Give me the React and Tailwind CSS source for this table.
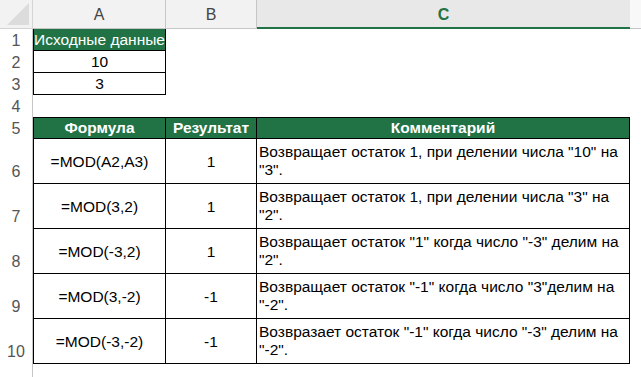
import React from 'react';

const green = 'bg-[#217346]';

const rows = [
  { f: '=MOD(A2,A3)', r: '1', c: ['Возвращает остаток 1, при делении числа "10" на', '"3".'] },
  { f: '=MOD(3,2)', r: '1', c: ['Возвращает остаток 1, при делении числа "3" на', '"2".'] },
  { f: '=MOD(-3,2)', r: '1', c: ['Возвращает остаток "1" когда число "-3" делим на', '"2".'] },
  { f: '=MOD(3,-2)', r: '-1', c: ['Возвращает остаток "-1" когда число "3"делим на', '"-2".'] },
  { f: '=MOD(-3,-2)', r: '-1', c: ['Возвразает остаток "-1" когда число "-3" делим на', '"-2".'] }
];

function RowNum({ n, tall }) {
  return <div className={`border-r border-[#c6c6c6] text-[#555] text-[16px] text-center flex items-end justify-center ${tall ? 'pb-[3px]' : 'pb-[1px]'}`}>{n}</div>;
}

function Row({ tall, children, n }) {
  return <div className={`grid grid-cols-[33px_133px_91px_373px_1fr] ${tall ? 'h-[45px]' : 'h-[22px]'}`}>
    <RowNum n={n} tall={tall} />
    {children}
  </div>;
}

export default function App() {
  return <div className="w-[641px] h-[377px] overflow-hidden bg-white text-[15.5px] leading-[18px] text-black" style={{ fontFamily: '"Liberation Sans", Arial, sans-serif' }}>
    {/* column headers */}
    <div className="grid grid-cols-[33px_133px_91px_373px_1fr] h-[29px] bg-[#f2f2f2] text-[16px]">
      <div className="relative border-r border-b border-[#d4d4d4]">
        <div className="absolute right-[3px] bottom-[3px] w-0 h-0 border-l-[22px] border-l-transparent border-b-[22px] border-b-[#dcdcdc]" />
      </div>
      <div className="border-r border-b border-[#c6c6c6] flex items-center justify-center text-[#444] pt-[2px]">A</div>
      <div className="border-r border-b border-[#c6c6c6] flex items-center justify-center text-[#444] pt-[2px]">B</div>
      <div className="border-b-2 border-[#217346] bg-[#e8e8e8] flex items-center justify-center text-[#217346] font-bold pt-[2px]">C</div>
      <div className="bg-[#f8f8f8] border-b border-[#c6c6c6]" />
    </div>

    <Row n="1">
      <div className={`${green} text-white border-l border-r border-b border-black flex items-center justify-center`}>Исходные данные</div>
    </Row>
    <Row n="2">
      <div className="border-l border-r border-b border-black flex items-center justify-center">10</div>
    </Row>
    <Row n="3">
      <div className="border-l border-r border-b border-black flex items-center justify-center">3</div>
    </Row>
    <Row n="4" />
    <Row n="5">
      <div className={`${green} text-white font-bold border-l border-r border-t border-b border-black flex items-center justify-center`}>Формула</div>
      <div className={`${green} text-white font-bold border-r border-t border-b border-black flex items-center justify-center`}>Результат</div>
      <div className={`${green} text-white font-bold border-r border-t border-b border-black flex items-center justify-center`}>Комментарий</div>
    </Row>
    {rows.map((row, i) => <Row key={i} n={String(6 + i)} tall>
      <div className="border-l border-r border-b border-black flex items-center justify-center pt-[2px]">{row.f}</div>
      <div className="border-r border-b border-black flex items-center justify-center pt-[2px]">{row.r}</div>
      <div className="border-r border-b border-black pl-[2px] pt-[4px] whitespace-nowrap">
        <div>{row.c[0]}</div>
        <div>{row.c[1]}</div>
      </div>
    </Row>)}
    <Row n="11" tall />
  </div>;
}
